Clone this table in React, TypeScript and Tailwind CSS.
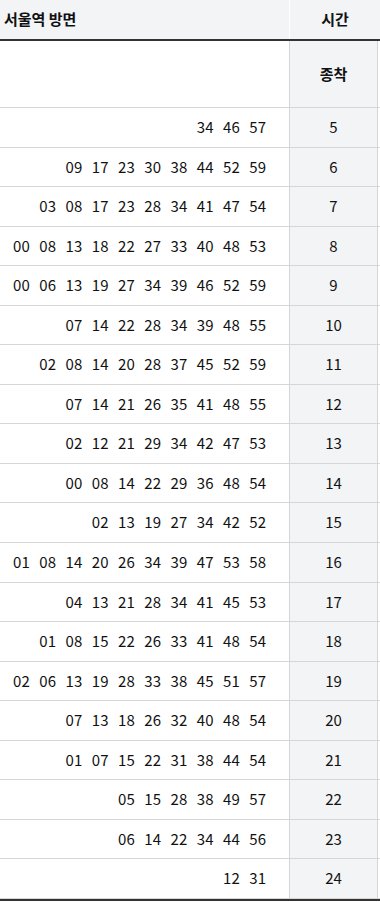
import React from "react";

const rows: [string, string[]][] = [
  ["5", ["34", "46", "57"]],
  ["6", ["09", "17", "23", "30", "38", "44", "52", "59"]],
  ["7", ["03", "08", "17", "23", "28", "34", "41", "47", "54"]],
  ["8", ["00", "08", "13", "18", "22", "27", "33", "40", "48", "53"]],
  ["9", ["00", "06", "13", "19", "27", "34", "39", "46", "52", "59"]],
  ["10", ["07", "14", "22", "28", "34", "39", "48", "55"]],
  ["11", ["02", "08", "14", "20", "28", "37", "45", "52", "59"]],
  ["12", ["07", "14", "21", "26", "35", "41", "48", "55"]],
  ["13", ["02", "12", "21", "29", "34", "42", "47", "53"]],
  ["14", ["00", "08", "14", "22", "29", "36", "48", "54"]],
  ["15", ["02", "13", "19", "27", "34", "42", "52"]],
  ["16", ["01", "08", "14", "20", "26", "34", "39", "47", "53", "58"]],
  ["17", ["04", "13", "21", "28", "34", "41", "45", "53"]],
  ["18", ["01", "08", "15", "22", "26", "33", "41", "48", "54"]],
  ["19", ["02", "06", "13", "19", "28", "33", "38", "45", "51", "57"]],
  ["20", ["07", "13", "18", "26", "32", "40", "48", "54"]],
  ["21", ["01", "07", "15", "22", "31", "38", "44", "54"]],
  ["22", ["05", "15", "28", "38", "49", "57"]],
  ["23", ["06", "14", "22", "34", "44", "56"]],
  ["24", ["12", "31"]],
];

export default function App() {
  return (
    <div
      className="w-[380px] bg-white text-[15px] text-[#111]"
      style={{ fontFamily: '"Noto Sans CJK KR", "Noto Sans", sans-serif' }}
    >
      <div className="flex h-[41px] border-b-2 border-[#333] bg-[#f3f4f6]">
        <div className="flex w-[289px] items-center pl-[4px] font-bold">서울역 방면</div>
        <div className="w-px bg-white" />
        <div className="flex flex-1 items-center justify-center font-bold">시간</div>
      </div>
      <div className="flex h-[67px] border-b border-[#d6d6d6]">
        <div className="w-[289px]" />
        <div className="w-px bg-[#d6d6d6]" />
        <div className="flex w-[87px] items-center justify-center bg-[#f3f4f6] font-bold">종착</div>
        <div className="w-px bg-[#d6d6d6]" />
      </div>
      {rows.map(([h, mins]) => (
        <div key={h} className="flex h-[39.55px] border-b border-[#d6d6d6]">
          <div className="flex w-[289px] items-center justify-end gap-[9.6px] pr-[23px]">
            {mins.map((m, i) => (
              <span key={i}>{m}</span>
            ))}
          </div>
          <div className="w-px bg-[#d6d6d6]" />
          <div className="flex w-[87px] items-center justify-center bg-[#f3f4f6]">{h}</div>
          <div className="w-px bg-[#d6d6d6]" />
        </div>
      ))}
      <div className="h-[2px] bg-[#333]" />
    </div>
  );
}
